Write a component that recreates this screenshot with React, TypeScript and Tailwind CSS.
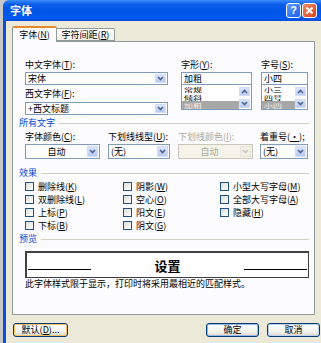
import clsx from "clsx"

const font = "font-['SimSun','Noto_Sans_CJK_SC',sans-serif]"

const Key = ({ k }: { k: string }) => (
  <span>
    (<span className="underline">{k}</span>)
  </span>
)

const Chevron = ({ color = "#4d6185", up = false }: { color?: string; up?: boolean }) => (
  <svg width="7" height="5" viewBox="0 0 7 5">
    <path
      d={up ? "M1 4 L3.5 1.5 L6 4" : "M1 1 L3.5 3.5 L6 1"}
      fill="none"
      stroke={color}
      strokeWidth="1.6"
    />
  </svg>
)

const ArrowButton = ({ up = false, disabled = false, className }: { up?: boolean; disabled?: boolean; className?: string }) => (
  <div
    className={clsx(
      "flex items-center justify-center w-[11px] border",
      disabled
        ? "border-[#e8e6da] bg-[#f2f1e8]"
        : "border-[#d2dcf5] bg-[linear-gradient(to_bottom,#dbe5fc,#b7cbf7)]",
      className
    )}
  >
    <Chevron up={up} color={disabled ? "#c9c7ba" : "#4d6185"} />
  </div>
)

type ComboProps = {
  value: string
  className: string
  center?: boolean
  disabled?: boolean
}

const Combo = ({ value, className, center, disabled }: ComboProps) => (
  <div
    className={clsx(
      "flex border",
      disabled ? "border-[#c9c7ba] bg-[#f5f4ea] text-[#aca899]" : "border-[#7f9db9] bg-white",
      className
    )}
  >
    <div className={clsx("flex-1 flex items-center px-[2px]", center && "justify-center")}>{value}</div>
    <ArrowButton disabled={disabled} className="my-[1px] mr-[1px]" />
  </div>
)

const Section = ({ title, className }: { title: string; className?: string }) => (
  <div className={clsx("flex items-center h-[12px] pl-[6px] pr-[5px]", className)}>
    <span className="text-[#0046d5]">{title}</span>
    <div className="flex-1 h-px bg-[#d0d0bf] ml-[4px]" />
  </div>
)

type ListProps = {
  label: React.ReactNode
  value: string
  items: string[]
  width: string
  className?: string
}

// the style / size pickers: a text box with a short, squashed list under it
const StyleList = ({ label, value, items, width, className }: ListProps) => (
  <div className={clsx("flex flex-col", width, className)}>
    <div className="h-[12px] leading-[12px]">{label}</div>
    <div className="mt-[1px] h-[13px] border border-[#7f9db9] bg-white flex items-center px-[2px]">{value}</div>
    <div className="h-[25px] border border-[#7f9db9] border-t-0 bg-white flex">
      <div className="flex-1 flex flex-col">
        {items.map((item, i) => (
          <div
            key={item}
            className={clsx(
              "h-[8px] flex items-center px-[2px]",
              i === items.length - 1 && "bg-[#a7a7a7] text-[#f0f0f0]"
            )}
          >
            <span className="block shrink-0 text-[9px] leading-[13px] scale-y-[0.58]">{item}</span>
          </div>
        ))}
      </div>
      <div className="w-[11px] flex flex-col justify-end gap-[3px] pb-[1px] mr-[1px]">
        <ArrowButton up className="h-[9px]" />
        <ArrowButton className="h-[9px]" />
      </div>
    </div>
  </div>
)

const Check = ({ label }: { label: React.ReactNode }) => (
  <div className="flex items-center h-[13px]">
    <div className="w-[9px] h-[9px] border border-[#1c5180] bg-[linear-gradient(135deg,#dcdcd7,#ffffff)]" />
    <span className="ml-[4px]">{label}</span>
  </div>
)

const Button = ({ children, className }: { children: React.ReactNode; className: string }) => (
  <div
    className={clsx(
      "h-[14px] flex items-center justify-center rounded-[3px] border border-[#003c74] bg-[linear-gradient(to_bottom,#ffffff,#f0f0ea_70%,#d8d2c6)]",
      className
    )}
  >
    {children}
  </div>
)

export default function App() {
  return (
    <div className={clsx("w-[321px] h-[343px] flex bg-[#c8c8c8] overflow-hidden text-[9px] text-black", font)}>
      <div className="w-[3px]" />
      <div className="flex-1 flex flex-col">
        <div className="h-[21px] rounded-tl-[6px] flex items-center pl-[7px] pr-[4px] bg-[linear-gradient(to_bottom,#3d8dfb,#0a5ee9_20%,#0055e5_55%,#0059f2_85%,#0a4cd6)]">
          <span className="text-white font-bold text-[11px]">字体</span>
          <div className="flex-1" />
          <div className="w-[15px] h-[15px] rounded-[3px] border border-white bg-[linear-gradient(135deg,#5b9cff,#1a5ee8)] flex items-center justify-center text-white font-bold text-[11px] leading-none font-['Liberation_Sans',sans-serif]">
            ?
          </div>
          <div className="ml-[1px] w-[15px] h-[15px] rounded-[3px] border border-white bg-[linear-gradient(135deg,#f08a6a,#d8401c)] flex items-center justify-center">
            <svg width="9" height="9" viewBox="0 0 9 9">
              <path d="M1.5 1.5 L7.5 7.5 M7.5 1.5 L1.5 7.5" stroke="white" strokeWidth="2" />
            </svg>
          </div>
        </div>

        <div className="flex-1 flex flex-col border-l-[3px] border-[#0b4fd9] bg-[#ece9d8] pl-[6px]">
          <div className="mt-[5px] h-[15px] flex items-end">
            <div className="relative z-10 w-[45px] h-[16px] -mb-[1px] border border-b-0 border-[#919b9c] border-t-[#e68b2c] border-t-2 bg-[#fcfcfe] flex items-center justify-center rounded-t-[2px]">
              <span>
                字体<Key k="N" />
              </span>
            </div>
            <div className="w-[58px] h-[13px] border border-l-0 border-[#919b9c] bg-[linear-gradient(to_bottom,#ffffff,#f1efe6)] flex items-center justify-center rounded-tr-[2px]">
              <span>
                字符间距<Key k="R" />
              </span>
            </div>
          </div>

          <div className="w-[303px] h-[274px] border border-[#919b9c] bg-[#fcfcfe] flex flex-col">
            <div className="mt-[17px] pl-[12px] flex">
              <div className="w-[143px] flex flex-col">
                <div className="h-[12px] leading-[12px]">
                  中文字体<Key k="T" />:
                </div>
                <Combo value="宋体" className="mt-[1px] h-[13px]" />
                <div className="mt-[3px] h-[12px] leading-[12px]">
                  西文字体<Key k="F" />:
                </div>
                <Combo value="+西文标题" className="mt-[2px] h-[13px]" />
              </div>
              <StyleList
                className="ml-[13px]"
                width="w-[71px]"
                label={
                  <>
                    字形<Key k="Y" />:
                  </>
                }
                value="加粗"
                items={["常规", "倾斜", "加粗"]}
              />
              <StyleList
                className="ml-[9px]"
                width="w-[47px]"
                label={
                  <>
                    字号<Key k="S" />:
                  </>
                }
                value="小四"
                items={["小三", "四号", "小四"]}
              />
            </div>

            <Section title="所有文字" className="mt-[2px]" />

            <div className="mt-[2px] pl-[12px] flex">
              <div className="w-[75px] flex flex-col">
                <div className="h-[12px] leading-[12px] whitespace-nowrap">
                  字体颜色<Key k="C" />:
                </div>
                <Combo value="自动" center className="mt-[1px] h-[15px]" />
              </div>
              <div className="ml-[8px] w-[62px] flex flex-col">
                <div className="h-[12px] leading-[12px] whitespace-nowrap">
                  下划线线型<Key k="U" />:
                </div>
                <Combo value="(无)" className="mt-[1px] h-[15px]" />
              </div>
              <div className="ml-[8px] w-[75px] flex flex-col">
                <div className="h-[12px] leading-[12px] whitespace-nowrap text-[#aca899]">
                  下划线颜色<Key k="I" />:
                </div>
                <Combo value="自动" center disabled className="mt-[1px] h-[15px]" />
              </div>
              <div className="ml-[7px] w-[48px] flex flex-col">
                <div className="h-[12px] leading-[12px] whitespace-nowrap">
                  着重号<Key k="·" />;
                </div>
                <Combo value="(无)" className="mt-[1px] h-[15px]" />
              </div>
            </div>

            <Section title="效果" className="mt-[8px]" />

            <div className="mt-[1px] pl-[12px] grid grid-cols-[98px_97px_1fr]">
              <Check label={<>删除线<Key k="K" /></>} />
              <Check label={<>阴影<Key k="W" /></>} />
              <Check label={<>小型大写字母<Key k="M" /></>} />
              <Check label={<>双删除线<Key k="L" /></>} />
              <Check label={<>空心<Key k="O" /></>} />
              <Check label={<>全部大写字母<Key k="A" /></>} />
              <Check label={<>上标<Key k="P" /></>} />
              <Check label={<>阳文<Key k="E" /></>} />
              <Check label={<>隐藏<Key k="H" /></>} />
              <Check label={<>下标<Key k="B" /></>} />
              <Check label={<>阴文<Key k="G" /></>} />
            </div>

            <Section title="预览" className="mt-[1px]" />

            <div className="mt-[6px] ml-[12px] w-[284px] h-[27px] border border-[#404040] border-t-2 border-l-2 bg-white flex items-center px-[1px]">
              <div className="w-[63px] h-px bg-black mt-[8px]" />
              <div className="flex-1 text-center font-bold text-[13px] leading-none">设置</div>
              <div className="w-[63px] h-px bg-black mt-[8px]" />
            </div>

            <div className="pl-[12px] h-[12px] leading-[12px]">此字体样式限于显示，打印时将采用最相近的匹配样式。</div>
          </div>

          <div className="mt-[8px] flex">
            <Button className="ml-[1px] w-[55px] shadow-[inset_0_0_0_1px_#f9c25e]">
              默认<Key k="D" />...
            </Button>
            <div className="flex-1" />
            <Button className="w-[53px] shadow-[inset_0_0_0_1px_#98b8ea]">确定</Button>
            <Button className="ml-[8px] mr-[1px] w-[53px] shadow-[inset_0_0_0_1px_#bcd0f0]">取消</Button>
          </div>
        </div>
      </div>
    </div>
  )
}
